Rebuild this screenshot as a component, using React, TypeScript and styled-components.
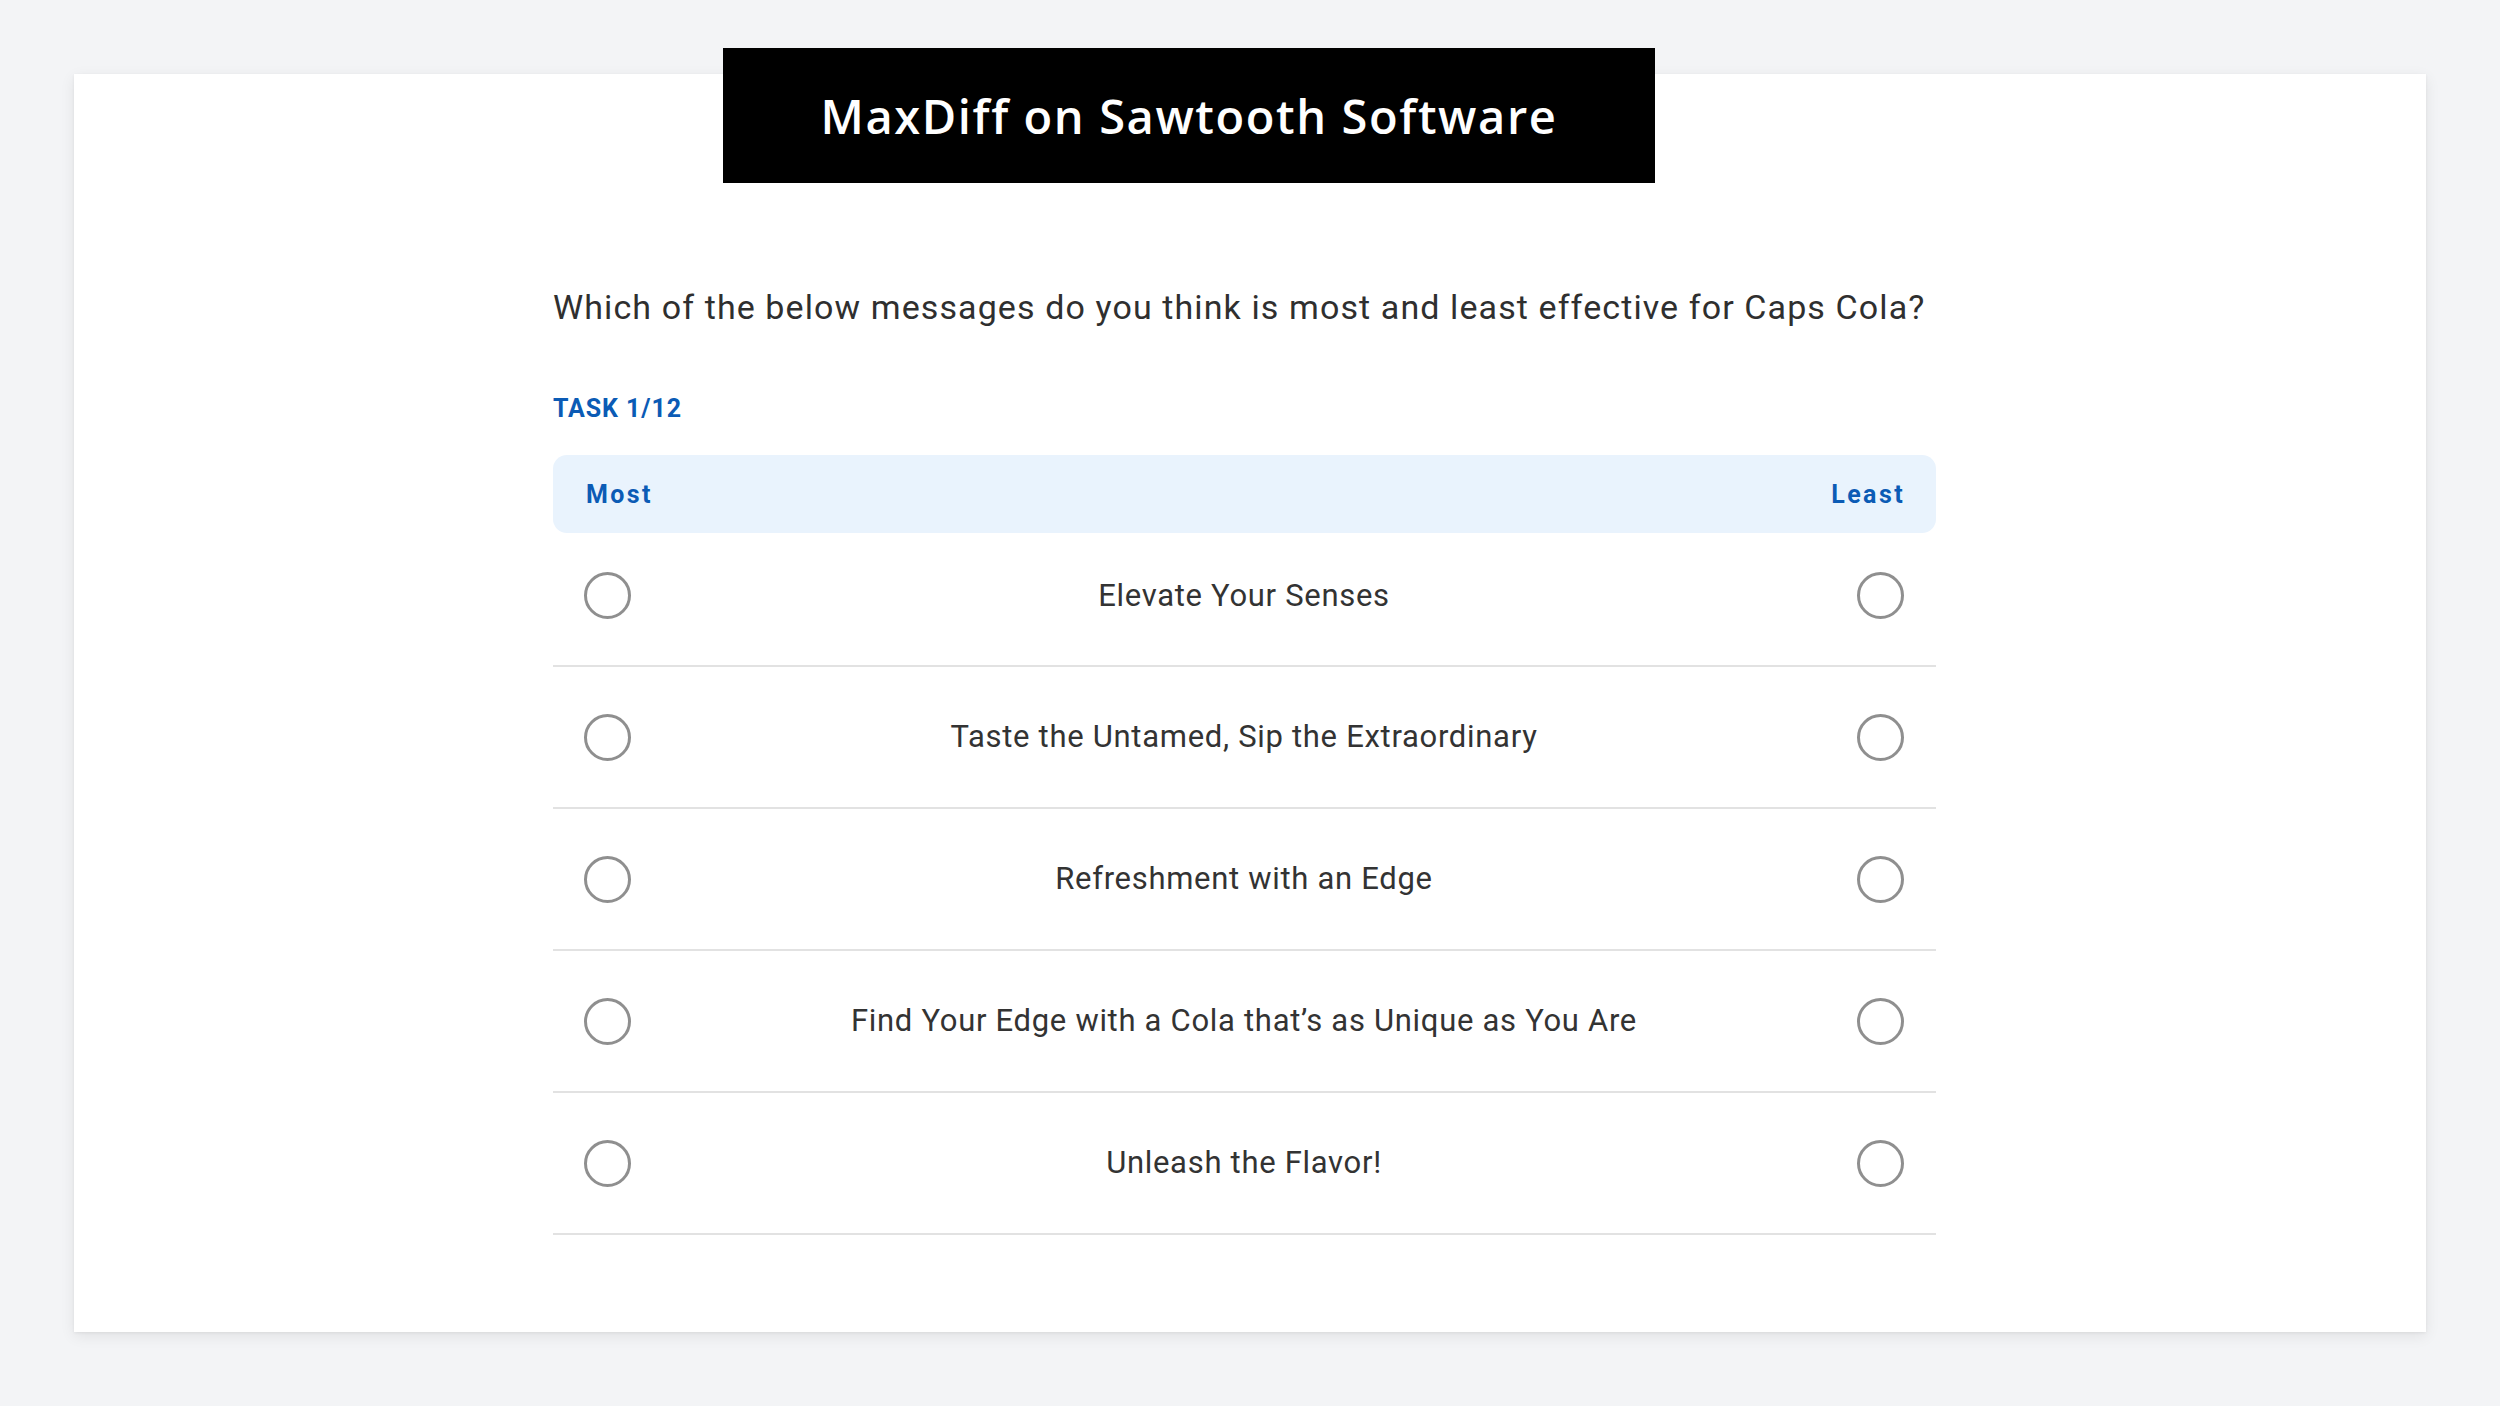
import React from 'react';
import styled, { createGlobalStyle } from 'styled-components';

const GlobalStyle = createGlobalStyle`
  html, body {
    margin: 0;
    padding: 0;
    background: #f3f4f6;
  }
  body {
    font-family: Roboto, "Liberation Sans", sans-serif;
    color: #333333;
  }
`;

const Page = styled.div`
  min-height: 1406px;
  box-sizing: border-box;
  padding: 74px 74px 0;
`;

const Card = styled.section`
  position: relative;
  height: 1258px;
  box-sizing: border-box;
  background: #ffffff;
  box-shadow: 0 4px 14px rgba(0, 0, 0, 0.08), 0 1px 3px rgba(0, 0, 0, 0.06);
  padding: 211px 0 0 479px;
`;

const Banner = styled.div`
  position: absolute;
  left: 649px;
  top: -26px;
  width: 932px;
  height: 135px;
  background: #000000;
  display: flex;
  align-items: center;
  justify-content: center;
  color: #ffffff;
  font-family: "Open Sans", sans-serif;
  font-weight: 600;
  font-size: 47px;
  letter-spacing: 1.6px;
`;

const Survey = styled.div`
  width: 1383px;
  display: flex;
  flex-direction: column;
`;

const Question = styled.h1`
  margin: 0;
  font-size: 34px;
  line-height: 44px;
  font-weight: 400;
  letter-spacing: 1.1px;
  color: #2f2f2f;
  white-space: nowrap;
`;

const TaskLabel = styled.div`
  margin-top: 64px;
  font-size: 25px;
  line-height: 31px;
  font-weight: 700;
  letter-spacing: 0.9px;
  color: #0b5bb5;
  text-transform: uppercase;
`;

const HeaderBar = styled.div`
  margin-top: 31px;
  height: 78px;
  box-sizing: border-box;
  padding: 0 31px 0 33px;
  border-radius: 14px;
  background: #e9f3fd;
  display: flex;
  align-items: center;
  justify-content: space-between;
  font-size: 25px;
  font-weight: 700;
  letter-spacing: 2.4px;
  color: #0b5bb5;
`;

const Row = styled.div<{ $first?: boolean }>`
  height: ${({ $first }) => ($first ? '132px' : '140px')};
  box-sizing: content-box;
  padding: 0 32px 0 31px;
  border-bottom: 2px solid #e2e2e2;
  display: flex;
  align-items: ${({ $first }) => ($first ? 'flex-start' : 'center')};
`;

const Radio = styled.span<{ $first?: boolean }>`
  width: 47px;
  height: 47px;
  box-sizing: border-box;
  border: 3px solid #8f8f8f;
  border-radius: 50%;
  flex-shrink: 0;
  margin-top: ${({ $first }) => ($first ? '39px' : '0')};
`;

const ItemText = styled.span<{ $first?: boolean }>`
  flex: 1;
  text-align: center;
  font-size: 31px;
  line-height: 40px;
  letter-spacing: 0.7px;
  color: #333333;
  margin-top: ${({ $first }) => ($first ? '43px' : '0')};
`;

const items = [
  'Elevate Your Senses',
  'Taste the Untamed, Sip the Extraordinary',
  'Refreshment with an Edge',
  'Find Your Edge with a Cola that\u2019s as Unique as You Are',
  'Unleash the Flavor!',
];

export default function App() {
  return (
    <Page>
      <GlobalStyle />
      <Card>
        <Banner>MaxDiff on Sawtooth Software</Banner>
        <Survey>
          <Question>
            Which of the below messages do you think is most and least effective for Caps Cola?
          </Question>
          <TaskLabel>Task 1/12</TaskLabel>
          <HeaderBar>
            <span>Most</span>
            <span>Least</span>
          </HeaderBar>
          {items.map((text, i) => (
            <Row key={text} $first={i === 0}>
              <Radio $first={i === 0} />
              <ItemText $first={i === 0}>{text}</ItemText>
              <Radio $first={i === 0} />
            </Row>
          ))}
        </Survey>
      </Card>
    </Page>
  );
}
